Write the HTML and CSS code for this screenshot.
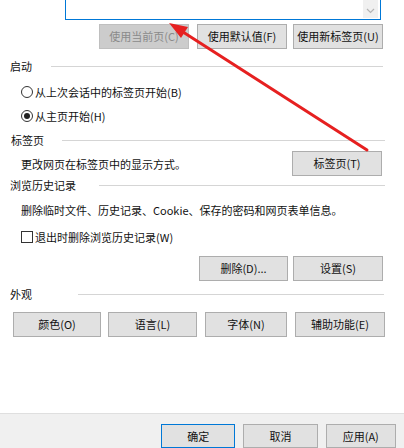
FILE: index.html
```html
<!DOCTYPE html>
<html lang="zh-CN">
<head>
<meta charset="utf-8">
<title>Internet 选项</title>
<link rel="stylesheet" href="styles.css">
</head>
<body>
<div class="page">
  <div class="main">
    <div class="homebox">
      <div class="home-scroll">
        <svg class="chev" width="9" height="6" viewBox="0 0 9 6"><path d="M1 1 L4.5 4.5 L8 1" fill="none" stroke="#b4b4b4" stroke-width="1.2"/></svg>
      </div>
    </div>
    <div class="btnrow row-home">
      <button class="btn w90 disabled">使用当前页(C)</button>
      <button class="btn w90 gap8">使用默认值(F)</button>
      <button class="btn w90 gap6">使用新标签页(U)</button>
    </div>

    <div class="heading h-start"><span class="htext">启动</span><span class="hline l-start"></span></div>
    <div class="opt opt-first"><span class="radio"></span><span>从上次会话中的标签页开始(B)</span></div>
    <div class="opt"><span class="radio checked"></span><span>从主页开始(H)</span></div>

    <div class="heading h-tabs"><span class="htext">标签页</span><span class="hline l-tabs"></span></div>
    <div class="descrow row-tabs">
      <span class="desc">更改网页在标签页中的显示方式。</span>
      <button class="btn w90 tabbtn">标签页(T)</button>
    </div>

    <div class="heading h-hist"><span class="htext">浏览历史记录</span><span class="hline l-hist"></span></div>
    <div class="line-text hist-desc">删除临时文件、历史记录、Cookie、保存的密码和网页表单信息。</div>
    <div class="opt chk-row"><span class="check"></span><span>退出时删除浏览历史记录(W)</span></div>
    <div class="btnrow row-hist">
      <button class="btn w89">删除(D)...</button>
      <button class="btn w90 gap5">设置(S)</button>
    </div>

    <div class="heading h-look"><span class="htext">外观</span><span class="hline l-look"></span></div>
    <div class="btnrow row-look">
      <button class="btn b-color">颜色(O)</button>
      <button class="btn b-lang">语言(L)</button>
      <button class="btn b-font">字体(N)</button>
      <button class="btn b-access">辅助功能(E)</button>
    </div>
  </div>
  <div class="footer">
    <button class="btn fbtn default">确定</button>
    <button class="btn fbtn">取消</button>
    <button class="btn fbtn apply">应用(A)</button>
  </div>
  <svg class="arrow" width="404" height="448" viewBox="0 0 404 448">
    <line x1="367" y1="150" x2="183" y2="32" stroke="#e62020" stroke-width="3" stroke-linecap="round"/>
    <polygon points="169,23 188,27 181,38" fill="#e62020"/>
  </svg>
</div>
</body>
</html>
```

FILE: styles.css
```css
* { box-sizing: border-box; }
html, body {
  margin: 0;
  padding: 0;
  background: #ffffff;
}
body {
  font-family: "Noto Sans CJK SC", "Noto Sans", sans-serif;
  font-size: 11px;
  color: #111111;
}
.page {
  position: relative;
  width: 404px;
  height: 448px;
  overflow: hidden;
  display: flex;
  flex-direction: column;
}
.main {
  height: 415px;
  background: #ffffff;
  display: flex;
  flex-direction: column;
}
.homebox {
  margin-left: 65px;
  width: 316px;
  height: 20px;
  border: 1px solid #0078d7;
  border-top: none;
  display: flex;
  justify-content: flex-end;
  padding-right: 2px;
}
.home-scroll {
  width: 15px;
  height: 18px;
  background: #f0f0f0;
  display: flex;
  align-items: flex-end;
  justify-content: center;
  padding-bottom: 4px;
}
.btn {
  font-family: inherit;
  font-size: 11px;
  color: #111111;
  background: #e1e1e1;
  border: 1px solid #adadad;
  height: 25px;
  padding: 0;
  margin: 0;
  line-height: 1;
}
.btn.disabled {
  background: #cccccc;
  border-color: #bfbfbf;
  color: #8a8a8a;
}
.w90 { width: 90px; }
.w89 { width: 89px; }
.gap8 { margin-left: 8px; }
.gap6 { margin-left: 6px; }
.gap5 { margin-left: 5px; }
.btnrow {
  display: flex;
  align-items: center;
}
.row-home {
  margin-top: 4px;
  padding-left: 99px;
}
.heading {
  height: 16px;
  display: flex;
  align-items: center;
  padding-left: 10px;
}
.htext { line-height: 16px; }
.hline {
  height: 1px;
  background: #d5d5d5;
  flex: 1;
}
.h-start { margin-top: 9px; }
.l-start { margin-left: 19px; margin-right: 21px; }
.h-tabs { margin-top: 4px; padding-left: 11px; }
.l-tabs { margin-left: 18px; margin-right: 19px; }
.h-hist { margin-top: 1px; }
.l-hist { margin-left: 23px; margin-right: 19px; }
.h-look { margin-top: 5px; }
.l-look { margin-left: 46px; margin-right: 20px; }
.opt {
  height: 24px;
  display: flex;
  align-items: center;
  padding-left: 21px;
}
.opt-first { margin-top: 6px; }
.radio {
  width: 12px;
  height: 12px;
  border: 1px solid #333333;
  border-radius: 50%;
  margin-right: 2px;
  display: flex;
  align-items: center;
  justify-content: center;
  background: #ffffff;
}
.radio.checked::after {
  content: "";
  width: 6px;
  height: 6px;
  border-radius: 50%;
  background: #222222;
}
.descrow {
  display: flex;
  align-items: center;
  justify-content: space-between;
  padding-left: 21px;
  padding-right: 22px;
}
.row-tabs { margin-top: 3px; }
.line-text {
  height: 20px;
  display: flex;
  align-items: center;
  padding-left: 21px;
}
.hist-desc { margin-top: 7px; }
.chk-row { margin-top: 5px; }
.check {
  width: 12px;
  height: 12px;
  border: 1px solid #333333;
  margin-right: 2px;
  background: #ffffff;
}
.row-hist {
  margin-top: 7px;
  padding-left: 199px;
}
.row-look {
  margin-top: 10px;
  padding-left: 13px;
}
.b-color { width: 88px; }
.b-lang { width: 89px; margin-left: 7px; }
.b-font { width: 82px; margin-left: 8px; }
.b-access { width: 90px; margin-left: 8px; }
.footer {
  flex: 1;
  background: #f0f0f0;
  border-top: 1px solid #dfdfdf;
  display: flex;
  align-items: flex-start;
  padding-top: 10px;
  padding-left: 161px;
}
.fbtn {
  height: 24px;
  width: 77px;
  margin-right: 8px;
}
.fbtn.default {
  border-color: #0078d7;
  margin-right: 8px;
}
.fbtn.apply { width: 73px; margin-left: 0; }
.arrow {
  position: absolute;
  left: 0;
  top: 0;
  pointer-events: none;
}
```
